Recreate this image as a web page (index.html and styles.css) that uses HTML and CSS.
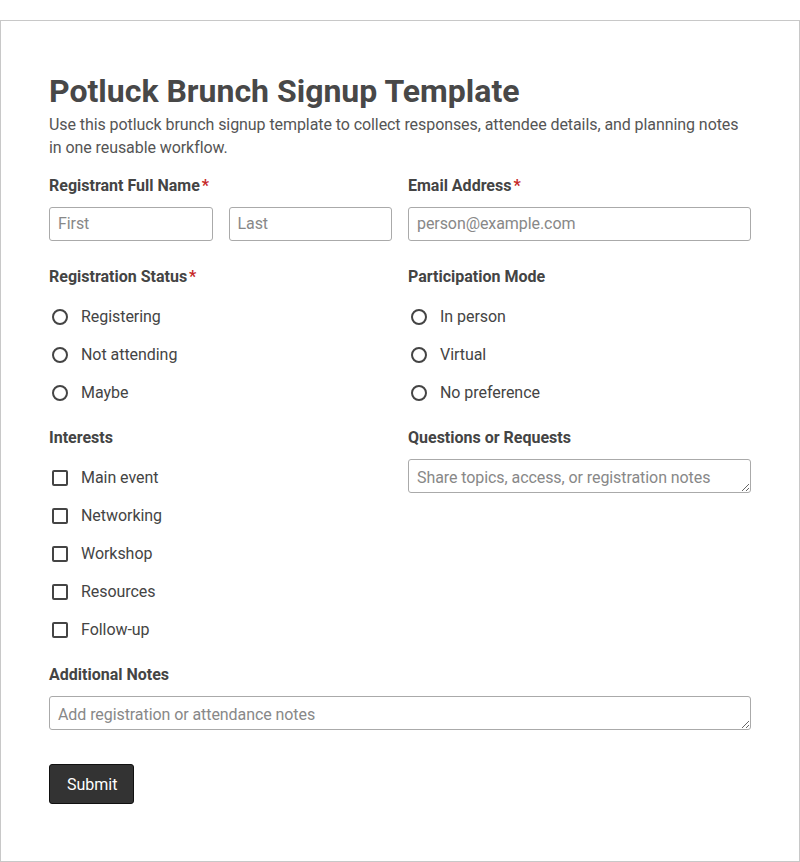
FILE: index.html
```html
<!DOCTYPE html>
<html lang="en">
<head>
    <meta charset="UTF-8">
    <meta name="viewport" content="width=device-width, initial-scale=1.0">
    <title>Potluck Brunch Signup Template</title>
    <link rel="stylesheet" href="styles.css">
</head>
<body>
    <div class="container">
        <h1>Potluck Brunch Signup Template</h1>
        <p class="intro">Use this potluck brunch signup template to collect responses, attendee details, and planning notes in one reusable workflow.</p>

        <form class="form">
            <div class="grid">
                <div class="field first-row">
                    <label class="label">Registrant Full Name<span class="req">*</span></label>
                    <div class="name-row">
                        <input type="text" placeholder="First">
                        <input type="text" placeholder="Last">
                    </div>
                </div>
                <div class="field first-row">
                    <label class="label">Email Address<span class="req">*</span></label>
                    <input type="email" placeholder="person@example.com">
                </div>

                <div class="field">
                    <span class="label">Registration Status<span class="req">*</span></span>
                    <div class="options">
                        <label class="option"><input type="radio" name="status"> Registering</label>
                        <label class="option"><input type="radio" name="status"> Not attending</label>
                        <label class="option"><input type="radio" name="status"> Maybe</label>
                    </div>
                </div>
                <div class="field">
                    <span class="label">Participation Mode</span>
                    <div class="options">
                        <label class="option"><input type="radio" name="mode"> In person</label>
                        <label class="option"><input type="radio" name="mode"> Virtual</label>
                        <label class="option"><input type="radio" name="mode"> No preference</label>
                    </div>
                </div>

                <div class="field">
                    <span class="label">Interests</span>
                    <div class="options">
                        <label class="option"><input type="checkbox"> Main event</label>
                        <label class="option"><input type="checkbox"> Networking</label>
                        <label class="option"><input type="checkbox"> Workshop</label>
                        <label class="option"><input type="checkbox"> Resources</label>
                        <label class="option"><input type="checkbox"> Follow-up</label>
                    </div>
                </div>
                <div class="field">
                    <label class="label">Questions or Requests</label>
                    <textarea placeholder="Share topics, access, or registration notes"></textarea>
                </div>

                <div class="field full">
                    <label class="label">Additional Notes</label>
                    <textarea placeholder="Add registration or attendance notes"></textarea>
                </div>
            </div>

            <div class="actions">
                <button type="button">Submit</button>
            </div>
        </form>
    </div>
</body>
</html>
```

FILE: styles.css
```css
* {
    box-sizing: border-box;
}

body {
    margin: 20px 0 0;
    font-family: Roboto, "Liberation Sans", Arial, sans-serif;
    color: #444;
    background: #fff;
}

.container {
    border: 1px solid #c8c8c8;
    min-height: calc(100vh - 20px);
    padding: 48px;
}

h1 {
    margin: 2px 0 0;
    font-size: 32px;
    line-height: 41.8px;
    font-weight: 700;
    color: #484848;
}

.intro {
    margin: 0 0 16px;
    font-size: 16px;
    line-height: 23.2px;
    letter-spacing: -0.075px;
    color: #555;
}

.grid {
    display: grid;
    grid-template-columns: 1fr 1fr;
    column-gap: 16px;
    row-gap: 23px;
}

.first-row {
    margin-bottom: 2px;
}

.full {
    grid-column: 1 / -1;
}

.label {
    display: block;
    font-size: 16px;
    line-height: 22px;
    font-weight: 700;
    color: #444;
    margin-bottom: 10px;
}

.req {
    color: #c62828;
    margin-left: 2px;
}

.name-row {
    display: grid;
    grid-template-columns: 1fr 1fr;
    gap: 16px;
}

input[type="text"],
input[type="email"],
textarea {
    display: block;
    width: 100%;
    height: 34px;
    padding: 5px 8px 7px;
    font-family: inherit;
    font-size: 16px;
    line-height: 20px;
    letter-spacing: -0.075px;
    color: #444;
    border: 1px solid #aaa;
    border-radius: 3px;
    background: #fff;
}

textarea {
    padding: 8px 8px 4px;
    resize: vertical;
}

::placeholder {
    color: #888;
}

.options {
    display: flex;
    flex-direction: column;
    gap: 16px;
    padding-top: 8px;
}

.option {
    display: flex;
    align-items: center;
    font-size: 16px;
    line-height: 22px;
    letter-spacing: -0.05px;
    color: #444;
}

.option input {
    appearance: none;
    width: 16px;
    height: 16px;
    margin: 0 13px 0 3px;
    border: 2px solid #444;
    background: #fff;
}

.option input[type="radio"] {
    border-radius: 50%;
}

.option input[type="checkbox"] {
    border-radius: 2px;
}

.actions {
    margin-top: 34px;
}

button {
    height: 40px;
    padding: 0 16px 0 17px;
    font-family: inherit;
    font-size: 16px;
    color: #fff;
    background: #333;
    border: 1px solid #111;
    border-radius: 3px;
    cursor: pointer;
}
```
